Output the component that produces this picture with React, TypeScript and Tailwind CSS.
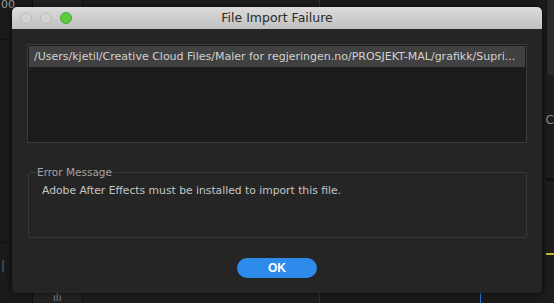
export default function App() {
  return (
    <div className="relative w-[554px] h-[303px] overflow-hidden bg-[#1c1c1c] font-['DejaVu_Sans',sans-serif]">
      {/* app behind the dialog */}
      <div className="flex h-full">
        <div className="w-[32px] flex flex-col bg-[#1a1a1a]">
          <div className="h-[40px] border-b border-[#111] text-[11px] leading-[10px] text-[#9a9a9a] pl-[1px]">00</div>
          <div className="h-[203px] border-b border-[#111]" />
          <div className="flex-1 text-[12px] text-[#666] pl-[1px] pt-[14px]">|</div>
        </div>
        <div className="w-[50px] border-l border-[#111] bg-[#222] flex flex-col justify-end items-center">
          <span className="text-[10px] leading-[10px] text-[#888]">ılı</span>
        </div>
        <div className="w-[238px] border-l border-[#111] bg-[#1d1d1d]" />
        <div className="w-[162px] border-l border-[#333] bg-[#1b1b1b]" />
        <div className="w-[66px] flex flex-col bg-[#1b1b1b]">
          <div className="flex-1" />
          <div className="h-[12px] border-l border-[#2c6fd6]" />
        </div>
        <div className="flex-1 flex flex-col bg-[#1d1d1d]">
          <div className="h-[75px] bg-[#2a2a2a] border-l border-[#111]" />
          <div className="h-[103px] text-[12px] text-[#8a8a8a] pt-[36px]">C</div>
          <div className="h-[3px] bg-[#111]" />
          <div className="h-[72px]" />
          <div className="h-[2px] bg-[#c8b82a]" />
          <div className="flex-1" />
        </div>
      </div>

      {/* dialog */}
      <div className="absolute left-[12px] top-[7px] w-[530px] h-[286px] rounded-[5px] bg-[#252525] shadow-[0_0_6px_rgba(0,0,0,0.6)] flex flex-col overflow-hidden">
        <div className="relative h-[22px] bg-gradient-to-b from-[#dcdcdc] to-[#c0c0c0] flex items-center justify-center shrink-0">
          <div className="absolute left-[8px] top-[5px] flex gap-[8px]">
            <span className="w-[12px] h-[12px] rounded-full bg-[#d3d3d3] border border-[#bdbdbd]" />
            <span className="w-[12px] h-[12px] rounded-full bg-[#d3d3d3] border border-[#bdbdbd]" />
            <span className="w-[12px] h-[12px] rounded-full bg-[#5ecb3f] border border-[#4aa932]" />
          </div>
          <span className="text-[12.5px] text-[#2a2a2a]">File Import Failure</span>
        </div>

        <div className="flex flex-col px-[15px] pt-[15px]">
          <div className="h-[99px] border border-[#3a3a3a] bg-[#1c1c1c] p-[1px]">
            <div className="h-[21px] bg-[#414141] text-[11px] leading-[21px] text-[#d2d2d2] pl-[5px] whitespace-nowrap overflow-hidden">
              /Users/kjetil/Creative Cloud Files/Maler for regjeringen.no/PROSJEKT-MAL/grafikk/Supri...
            </div>
          </div>

          <div className="relative mt-[29px] h-[66px] border border-[#383838] rounded-[2px] ml-[1px]">
            <span className="absolute left-[7px] top-[-8px] bg-[#252525] px-[1px] text-[10.5px] leading-[14px] text-[#a4a4a4]">Error Message</span>
            <div className="pl-[13px] pt-[11px] text-[10.75px] leading-[14px] text-[#c6c6c6]">
              Adobe After Effects must be installed to import this file.
            </div>
          </div>
        </div>

        <div className="flex justify-center pt-[20px]">
          <button className="w-[80px] h-[20px] rounded-full bg-[#2d8ceb] text-white text-[12px] font-bold leading-[20px] font-['Liberation_Sans',sans-serif]">OK</button>
        </div>
      </div>
    </div>
  )
}
